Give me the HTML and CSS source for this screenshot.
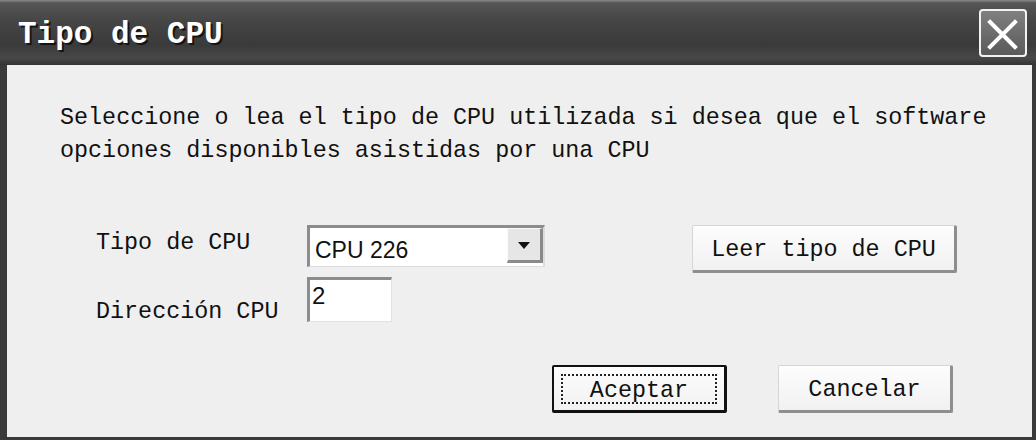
FILE: index.html
```html
<!DOCTYPE html>
<html lang="es">
<head>
    <meta charset="UTF-8">
    <meta name="viewport" content="width=device-width, initial-scale=1.0">
    <title>Tipo de CPU</title>
    <link rel="stylesheet" href="styles.css">
</head>
<body>
    <div class="dialog">
        <div class="titlebar">
            <span class="title">Tipo de CPU</span>
            <button class="close-btn" aria-label="Cerrar">
                <svg width="44" height="44" viewBox="0 0 44 44">
                    <path d="M9 11 L34 36 M34 11 L9 36" stroke="#fff" stroke-width="4" stroke-linecap="square"/>
                </svg>
            </button>
        </div>

        <div class="content">
            <p class="message">Seleccione o lea el tipo de CPU utilizada si desea que el software<br>opciones disponibles asistidas por una CPU</p>

            <div class="fields">
                <label class="field-label first">Tipo de CPU</label>
                <div class="select">
                    <span class="select-value">CPU 226</span>
                    <span class="select-arrow"></span>
                </div>
                <button class="win-btn read-btn">Leer tipo de CPU</button>

                <label class="field-label second">Dirección CPU</label>
                <div class="address">2</div>
            </div>

            <div class="actions">
                <button class="win-btn default-btn"><span class="focus-ring">Aceptar</span></button>
                <button class="win-btn">Cancelar</button>
            </div>
        </div>
    </div>
</body>
</html>
```

FILE: styles.css
```css
html, body {
    margin: 0;
    padding: 0;
}
body {
    width: 1036px;
    height: 440px;
    overflow: hidden;
    font-family: "Liberation Mono", "DejaVu Sans Mono", monospace;
    color: #111;
}
.dialog {
    display: flex;
    flex-direction: column;
    width: 1036px;
    height: 440px;
    background-color: #3a3a3a;
}
.titlebar {
    height: 65px;
    box-sizing: border-box;
    padding: 4px 9px 0 18px;
    display: flex;
    align-items: center;
    justify-content: space-between;
    background: linear-gradient(to bottom, #8a8a8a 0, #555 3px, #464646 20px, #3a3a3a 45px, #484848 58px, #333 65px);
}
.title {
    font-weight: bold;
    font-size: 31px;
    color: #fff;
    text-shadow: 2px 2px 0 #151515;
}
.close-btn {
    width: 48px;
    height: 48px;
    margin-top: -4px;
    padding: 0;
    border: 2px solid #f2f2f2;
    border-radius: 4px;
    background: linear-gradient(to bottom, #808080, #5a5a5a);
    display: flex;
    align-items: center;
    justify-content: center;
}
.content {
    flex: 1;
    margin: 0 4px 3px 7px;
    padding: 37px 79px 0 53px;
    background-color: #efefef;
    font-size: 23.4px;
}
.message {
    margin: 0;
    line-height: 33px;
    white-space: nowrap;
}
.fields {
    display: grid;
    grid-template-columns: 211px 238px 147px 265px;
    grid-template-rows: 48px 45px;
    row-gap: 4px;
    margin: 57px 0 0 36px;
}
.field-label {
    line-height: 24px;
}
.field-label.first {
    align-self: start;
    margin-top: 6px;
}
.field-label.second {
    align-self: end;
    grid-column: 1;
    margin-bottom: -2px;
}
.select {
    height: 42px;
    box-sizing: border-box;
    display: flex;
    border-style: solid;
    border-width: 3px 2px 1px 3px;
    border-color: #8c8c8c #dcdcdc #dcdcdc #8c8c8c;
    background-color: #fff;
}
.select-value {
    padding: 9px 0 0 5px;
    font-family: "Liberation Sans", Arial, sans-serif;
    font-size: 23px;
    line-height: 26px;
}
.select-arrow {
    margin-left: auto;
    width: 36px;
    height: 35px;
    box-sizing: border-box;
    border-style: solid;
    border-width: 1px 3px 3px 1px;
    border-color: #fafafa #8a8a8a #8a8a8a #fafafa;
    background-color: #e6e6e6;
    display: flex;
    align-items: center;
    justify-content: center;
}
.select-arrow::after {
    content: "";
    border-left: 6px solid transparent;
    border-right: 6px solid transparent;
    border-top: 7px solid #111;
    margin-top: 2px;
}
.read-btn {
    grid-column: 4;
}
.address {
    grid-column: 2;
    width: 85px;
    height: 45px;
    box-sizing: border-box;
    border-style: solid;
    border-width: 3px 1px 1px 3px;
    border-color: #8c8c8c #e2e2e2 #e2e2e2 #8c8c8c;
    background-color: #fff;
    padding: 3px 0 0 2px;
    font-family: "Liberation Sans", Arial, sans-serif;
    font-size: 24px;
    line-height: 26px;
}
.win-btn {
    height: 48px;
    box-sizing: border-box;
    padding: 3px 0 0;
    border-style: solid;
    border-width: 1px 3px 3px 1px;
    border-color: #d6d6d6 #8e8e8e #8e8e8e #d6d6d6;
    border-radius: 2px;
    background: linear-gradient(to bottom, #fdfdfd, #f1f1f1);
    font-family: "Liberation Mono", "DejaVu Sans Mono", monospace;
    font-size: 23.4px;
    color: #111;
    display: flex;
    align-items: center;
    justify-content: center;
}
.actions {
    display: flex;
    justify-content: flex-end;
    gap: 51px;
    margin-top: 43px;
}
.actions .win-btn {
    width: 175px;
}
.default-btn {
    border: 2px solid #111;
    border-right-width: 3px;
    border-bottom-width: 3px;
    padding: 0;
}
.focus-ring {
    width: 156px;
    height: 30px;
    box-sizing: border-box;
    border: 2px dotted #222;
    display: flex;
    align-items: center;
    justify-content: center;
    padding-top: 5px;
}
```
